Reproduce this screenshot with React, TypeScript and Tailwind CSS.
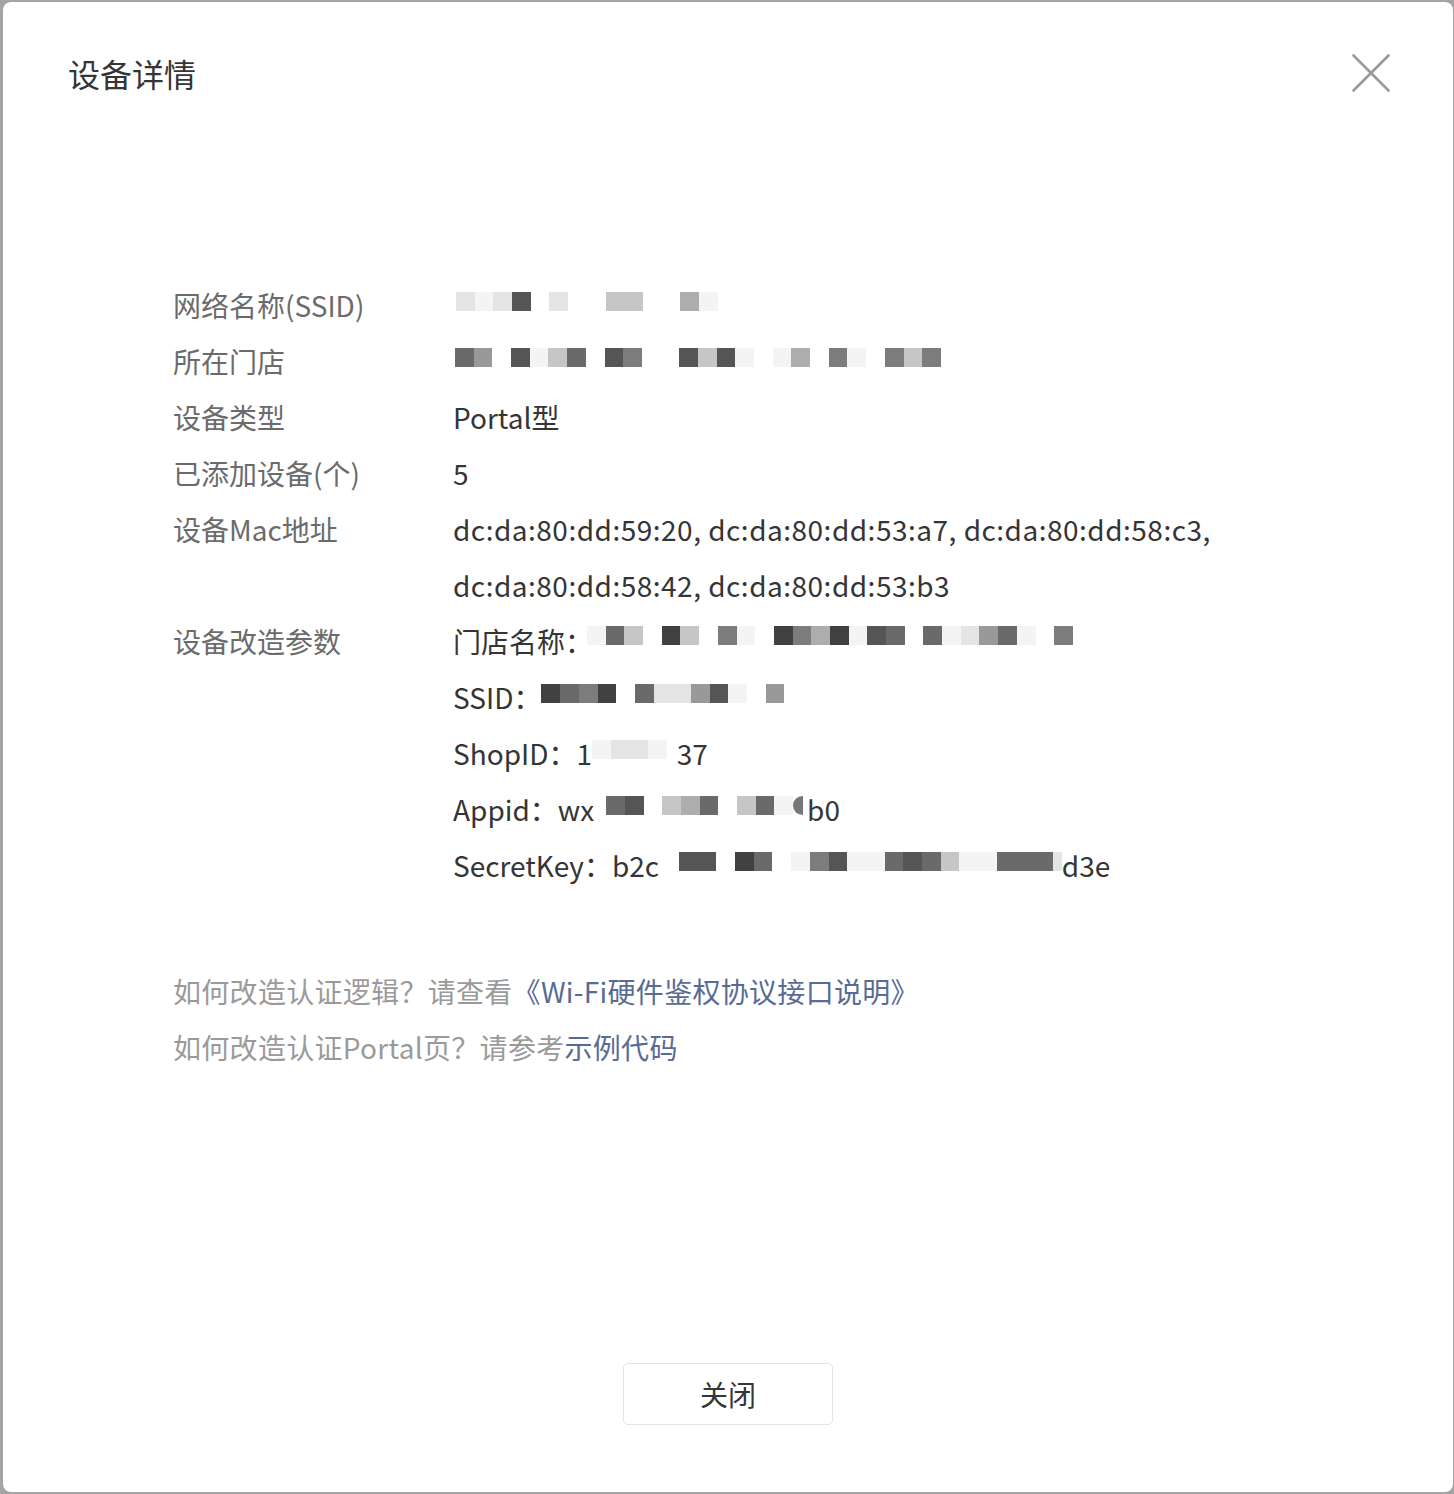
import { X } from 'lucide-react';

const shade: Record<string, string> = {
    '.': 'bg-transparent',
    a: 'bg-[#f4f4f4]',
    b: 'bg-[#e4e4e4]',
    c: 'bg-[#c6c6c6]',
    d: 'bg-[#adadad]',
    e: 'bg-[#999999]',
    f: 'bg-[#7c7c7c]',
    g: 'bg-[#6a6a6a]',
    h: 'bg-[#555555]',
    i: 'bg-[#414141]',
};

// pixelated (masked) values, one letter per mosaic cell
function Mosaic({ cells, className = '' }: { cells: string; className?: string }) {
    return (
        <span className={`inline-flex align-middle h-[19px] ${className}`}>
            {cells.split('').map((c, i) => (
                <span key={i} className={`w-[18.7px] h-[19px] ${shade[c]}`} />
            ))}
        </span>
    );
}

function Row({ label, children }: any) {
    return (
        <div className="grid grid-cols-[280px_1fr]">
            <div className="text-[#6b6b6b]">{label}</div>
            <div className="text-[#353535]">{children}</div>
        </div>
    );
}

export default function App() {
    return (
        <div
            className="h-[1494px] w-full bg-[#a4a4a4] pt-[2px] pb-[2px] pl-[3px] pr-[1px]"
            style={{ fontFamily: '"Noto Sans CJK SC", "Noto Sans", sans-serif' }}
        >
            <div className="h-full bg-white rounded-[8px] flex flex-col">
                <div className="flex items-center justify-between pt-[51px] pl-[65px] pr-[62px]">
                    <h1 className="text-[32px] leading-[40px] text-[#353535]">设备详情</h1>
                    <button className="w-[40px] h-[40px] flex items-center justify-center text-[#999999]">
                        <X size={70} strokeWidth={0.9} className="shrink-0" />
                    </button>
                </div>

                <div className="mt-[184px] pl-[170px] text-[28px] leading-[56px]">
                    <Row label="网络名称(SSID)">
                        <Mosaic cells="babh.b..cc..da" className="ml-[3px] mb-[16px]" />
                    </Row>
                    <Row label="所在门店">
                        <Mosaic cells="ge.hacg.hf..hcha.ad.fa.fcf" className="ml-[2px] mb-[16px]" />
                    </Row>
                    <Row label="设备类型">Portal型</Row>
                    <Row label="已添加设备(个)">5</Row>
                    <Row label="设备Mac地址">
                        <div className="tracking-[0.5px]">dc:da:80:dd:59:20, dc:da:80:dd:53:a7, dc:da:80:dd:58:c3,</div>
                        <div className="tracking-[0.5px]">dc:da:80:dd:58:42, dc:da:80:dd:53:b3</div>
                    </Row>
                    <Row label="设备改造参数">
                        <div>
                            门店名称：
                            <Mosaic cells="agc.ic.fa.ifdiahg.gabega.f" className="-ml-[6px] mb-[20px]" />
                        </div>
                        <div>
                            SSID：
                            <Mosaic cells="igfi.gbbeha.e" className="mb-[16px]" />
                        </div>
                        <div>
                            ShopID：1
                            <Mosaic cells="abba" className="mb-[16px]" />
                            <span className="ml-[10px]">37</span>
                        </div>
                        <div className="flex items-center">
                            <span>Appid：wx</span>
                            <Mosaic cells="gh.cdg.cga" className="ml-[12px] mb-[8px]" />
                            <span className="w-[10px] h-[19px] mb-[8px] rounded-l-full bg-[#777777]" />
                            <span className="ml-[4px]">b0</span>
                        </div>
                        <div className="flex items-center">
                            <span>SecretKey：b2c</span>
                            <Mosaic cells="hh.ig.afhaaghgcaaggg" className="ml-[20px] mb-[8px]" />
                            <span className="w-[9px] h-[19px] mb-[8px] bg-[#e4e4e4]" />
                            <span>d3e</span>
                        </div>
                    </Row>
                </div>

                <div className="mt-[70px] pl-[170px] text-[28px] leading-[56px] text-[#9a9a9a] tracking-[0.3px]">
                    <p>
                        如何改造认证逻辑？请查看
                        <a className="text-[#576b95]">《Wi-Fi硬件鉴权协议接口说明》</a>
                    </p>
                    <p>
                        如何改造认证Portal页？请参考<a className="text-[#576b95]">示例代码</a>
                    </p>
                </div>

                <div className="mt-auto mb-[67px] flex justify-center">
                    <button className="w-[210px] h-[62px] border border-[#e2e2e2] rounded-[5px] bg-white text-[28px] text-[#353535]">
                        关闭
                    </button>
                </div>
            </div>
        </div>
    );
}
